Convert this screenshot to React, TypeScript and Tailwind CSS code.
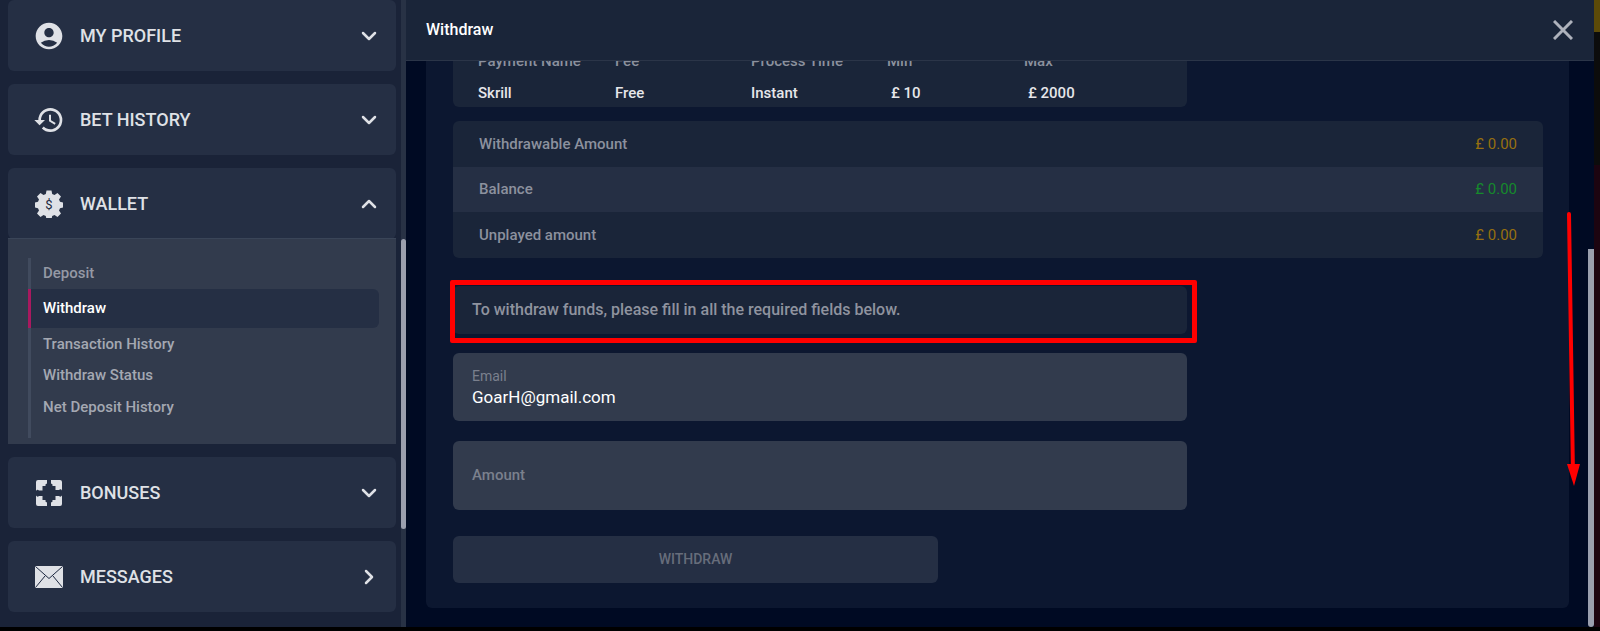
import { ChevronDown, ChevronRight, ChevronUp } from 'lucide-react';
import { MdAccountCircle, MdHistory } from 'react-icons/md';

const font = 'font-[Roboto,sans-serif]';

function BonusIcon() {
  return (
    <svg viewBox="0 0 28 28" className="h-[28px] w-[28px]" fill="#dfe1e6">
      <path d="M1 3a2 2 0 0 1 2-2h9v3.5a2 2 0 0 0-1.5 2.5H7.500v4.500H4a2 2 0 0 0-3 0.500z" />
      <path d="M16 1h9a2 2 0 0 1 2 2v8.500a2 2 0 0 0-3-0.500h-3.500V7H17.500A2 2 0 0 0 16 4.500z" />
      <path d="M1 16.500a2 2 0 0 0 3 0.500h3.500v4H10.500A2 2 0 0 0 12 23.500V27H3a2 2 0 0 1-2-2z" />
      <path d="M27 16.500V25a2 2 0 0 1-2 2h-9v-3.500a2 2 0 0 0 1.500-2.500h3V17H24a2 2 0 0 0 3-0.500z" />
    </svg>
  );
}

function MailIcon() {
  return (
    <svg viewBox="0 0 28 22" className="h-[22px] w-[28px]">
      <rect x="0" y="0" width="28" height="22" rx="1" fill="#dfe1e6" />
      <path d="M0.500 0.500 14 12.500 27.500 0.500M0.500 21.500 10 10M27.500 21.500 18 10" fill="none" stroke="#1d2840" strokeWidth="1" />
    </svg>
  );
}

function WalletIcon() {
  return (
    <svg viewBox="0 0 28 28" className="h-[28px] w-[28px]">
      <path
        fill="#dfe1e6"
        d="M11.500 0.500h5l0.700 3.500 2.300 1 3-2 3.500 3.500-2 3 1 2.300 3.500 0.700v5l-3.500 0.700-1 2.300 2 3-3.500 3.500-3-2-2.300 1-0.700 3.500h-5l-0.700-3.500-2.300-1-3 2L2 23.500l2-3-1-2.300-3.500-0.700v-5L3 11.800l1-2.300-2-3L5.500 3l3 2 2.300-1z"
      />
      <text x="14" y="19" textAnchor="middle" fontSize="13" fontFamily="Roboto, sans-serif" fill="#1d2840">
        $
      </text>
    </svg>
  );
}

function MenuCard({ icon, label, arrow }: { icon: React.ReactNode; label: string; arrow: 'down' | 'up' | 'right' }) {
  const Arrow = arrow === 'down' ? ChevronDown : arrow === 'up' ? ChevronUp : ChevronRight;
  return (
    <div className="flex h-[71px] items-center rounded-md bg-[#252f44] pl-[27px] pr-[15px]">
      <div className="flex w-[45px] shrink-0 items-center">{icon}</div>
      <span className="flex-1 text-[18px] font-medium text-[#dfe1e6]">{label}</span>
      <Arrow size={24} strokeWidth={2.500} className="text-[#dfe1e6]" />
    </div>
  );
}

function StatRow({ label, value, light, color }: { label: string; value: string; light?: boolean; color: string }) {
  return (
    <div className={`flex h-[45.500px] items-center justify-between px-[26px] text-[15px] ${light ? 'bg-[#252f44]' : ''}`}>
      <span className="font-medium text-[#8c919e]">{label}</span>
      <span className={color}>{value}</span>
    </div>
  );
}

const subItems = ['Transaction History', 'Withdraw Status', 'Net Deposit History'];

export default function App() {
  return (
    <div className={`${font} relative flex h-[631px] w-[1600px] flex-col overflow-hidden bg-[#000000]`}>
      <div className="flex h-[627px] shrink-0">
        {/* Sidebar */}
        <aside className="flex h-full w-[406px] shrink-0 bg-[#1a2338]">
          <div className="flex w-[396px] shrink-0 flex-col gap-[13px] pl-[8px]">
            <MenuCard icon={<MdAccountCircle size={32} className="-ml-[2px] text-[#dfe1e6]" />} label="MY PROFILE" arrow="down" />
            <MenuCard icon={<MdHistory size={32} className="-ml-[2px] text-[#dfe1e6]" />} label="BET HISTORY" arrow="down" />
            <div>
              <MenuCard icon={<WalletIcon />} label="WALLET" arrow="up" />
              <div className="mt-[-1px] h-[206px] border-t border-[#3a4558] bg-[#323b4d] pl-[20px] pr-[17px] pt-[19px]">
                <div className="flex h-[180px] flex-col border-l-[3px] border-[#414b5e]">
                  <div className="flex h-[31px] items-center pl-[12px] text-[15px] font-medium text-[#9599a5]">Deposit</div>
                  <div className="-ml-[3px] flex h-[39px] items-center rounded-r-md border-l-[3px] border-[#a9195f] bg-[#252f44] pl-[12px] text-[15px] font-medium text-white">
                    Withdraw
                  </div>
                  {subItems.map((item) => (
                    <div key={item} className="flex h-[31.500px] items-center pl-[12px] text-[15px] font-medium text-[#a4a8b2]">
                      {item}
                    </div>
                  ))}
                </div>
              </div>
            </div>
            <MenuCard icon={<BonusIcon />} label="BONUSES" arrow="down" />
            <MenuCard icon={<MailIcon />} label="MESSAGES" arrow="right" />
          </div>
          {/* sidebar scrollbar */}
          <div className="ml-[5px] w-[5px] bg-[#283245]">
            <div className="mt-[239px] h-[290px] rounded-sm bg-[#9a9fae]" />
          </div>
        </aside>

        {/* Modal */}
        <main className="flex w-[1188px] shrink-0 flex-col bg-[#000a23]">
          <header className="flex h-[61px] shrink-0 items-center justify-between border-b border-[#2b3548] bg-[#1a2539] pl-[20px] pr-[20px]">
            <span className="text-[16px] font-medium text-white">Withdraw</span>
            <svg viewBox="0 0 20 20" className="mr-[1px] h-[20px] w-[20px]" stroke="#aeb2bc" strokeWidth="3">
              <path d="M1 1 19 19M19 1 1 19" />
            </svg>
          </header>
          <div className="flex min-h-0 flex-1">
            <div className="ml-[20px] flex h-[547px] w-[1143px] flex-col rounded-b-md bg-[#0c1730] pl-[27px] pr-[26px]">
              {/* payment table, scrolled under the header */}
              <div className="h-[46px] w-[734px] overflow-hidden rounded-b-md bg-[#1a2539]">
                <div className="-mt-[11px] grid grid-cols-[137px_136px_136px_137px_1fr] px-[25px] text-[15px] font-medium">
                  <span className="text-[#8c919e]">Payment Name</span>
                  <span className="text-[#8c919e]">Fee</span>
                  <span className="text-[#8c919e]">Process Time</span>
                  <span className="text-[#8c919e]">Min</span>
                  <span className="text-[#8c919e]">Max</span>
                  <span className="mt-[9px] text-[#e6e7ea]">Skrill</span>
                  <span className="mt-[9px] text-[#e6e7ea]">Free</span>
                  <span className="mt-[9px] text-[#e6e7ea]">Instant</span>
                  <span className="mt-[9px] pl-[4px] text-[#e6e7ea]">£ 10</span>
                  <span className="mt-[9px] pl-[4px] text-[#e6e7ea]">£ 2000</span>
                </div>
              </div>

              <div className="mt-[14px] overflow-hidden rounded-md bg-[#1a2539]">
                <StatRow label="Withdrawable Amount" value="£ 0.00" color="text-[#97700f]" />
                <StatRow label="Balance" value="£ 0.00" light color="text-[#168a2c]" />
                <StatRow label="Unplayed amount" value="£ 0.00" color="text-[#97700f]" />
              </div>

              <div className="mt-[28px] flex h-[48px] w-[734px] items-center rounded-md bg-[#1a2539] pl-[19px] text-[16px] font-medium text-[#8f939f]">
                To withdraw funds, please fill in all the required fields below.
              </div>

              <div className="mt-[19px] flex h-[68px] w-[734px] flex-col justify-center rounded-md bg-[#323b4d] pl-[19px]">
                <span className="text-[14px] leading-[20px] text-[#7b808d]">Email</span>
                <span className="text-[17px] leading-[22px] text-white">GoarH@gmail.com</span>
              </div>

              <div className="mt-[20px] flex h-[69px] w-[734px] items-center rounded-md bg-[#323b4d] pl-[19px] text-[15px] font-medium text-[#7b808d]">
                Amount
              </div>

              <button className="mt-[26px] h-[47px] w-[485px] rounded-md bg-[#252f44] text-[14px] font-medium text-[#676d7b]">
                WITHDRAW
              </button>
            </div>
            {/* modal scrollbar */}
            <div className="ml-[19px] w-[6px]">
              <div className="mt-[188px] h-[378px] rounded-b-sm bg-[#9a9fae]" />
            </div>
          </div>
        </main>

        {/* page visible behind the modal */}
        <div className="flex w-[6px] flex-col">
          <div className="h-[32px] bg-[#5c4a08]" />
          <div className="h-[133px] bg-[#0c0c0c]" />
          <div className="flex-1 bg-[#1c0410]" />
        </div>
      </div>

      {/* annotations drawn on the screenshot */}
      <div className="absolute left-[450px] top-[280px] h-[63px] w-[747px] rounded-[2px] border-[5px] border-[#ff0000]" />
      <svg className="absolute left-[1560px] top-[210px]" width="20" height="280" viewBox="0 0 20 280">
        <path d="M9 4 13 265" stroke="#ff0000" strokeWidth="4" strokeLinecap="round" />
        <path d="M7 271H20L14 293Z" fill="#ff0000" transform="translate(0 -17)" />
      </svg>
    </div>
  );
}
